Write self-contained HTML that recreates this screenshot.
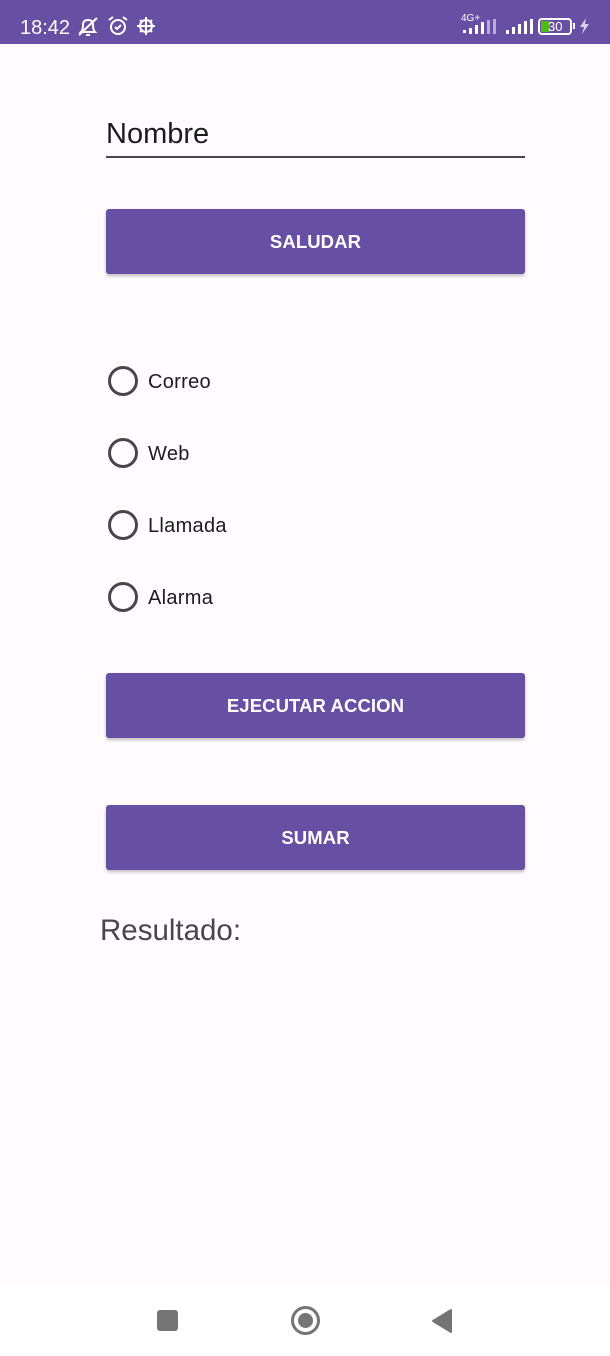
<!DOCTYPE html>
<html><head><meta charset="utf-8"><style>
*{margin:0;padding:0;box-sizing:border-box}
body{width:610px;height:1356px;background:#fffbfe;font-family:"Liberation Sans",Roboto,sans-serif;position:relative;overflow:hidden}
.sb{position:absolute;left:0;top:0;width:610px;height:44px;background:#674fa3;color:#fff}
.abs{position:absolute}
.btn{position:absolute;left:106px;width:419px;height:65px;background:#674fa3;border-radius:3px;box-shadow:0 2px 3px rgba(0,0,0,.25);color:#fff;font-size:18.5px;font-weight:bold;text-align:center;line-height:66px;letter-spacing:.1px}
.radio{position:absolute;left:108px;width:30px;height:30px;border:3px solid #49454f;border-radius:50%}
.rl{position:absolute;left:148px;font-size:20px;color:#1d1b20;letter-spacing:.3px}
.nav{position:absolute;left:0;top:1284px;width:610px;height:72px;background:#fff}
</style></head><body>
<div class="sb">
 <div class="abs" style="left:20px;top:16px;font-size:20px;line-height:24px">18:42</div>
 <svg class="abs" style="left:76px;top:16px" width="24" height="22" viewBox="0 0 24 22" fill="none" stroke="#fff" stroke-width="2"><path d="M5 16 Q7 14 7 9 Q7 4 12 4 Q17 4 17 9 Q17 14 19 16 Z"/><path d="M10 19h4"/><path d="M3 19L21 2"/></svg>
 <svg class="abs" style="left:107px;top:15px" width="22" height="22" viewBox="0 0 22 22" fill="none" stroke="#fff" stroke-width="2"><circle cx="11" cy="12" r="7"/><path d="M8 12l2 2 4-4"/><path d="M2 5l4-3M20 5l-4-3"/></svg>
 <svg class="abs" style="left:135px;top:15px" width="22" height="22" viewBox="0 0 22 22" fill="none" stroke="#fff" stroke-width="2"><circle cx="11" cy="11" r="6"/><path d="M11 2v3M11 17v3M2 11h3M17 11h3M5 5l2 2M15 15l2 2M5 17l2-2M15 7l2-2M6 11h10M11 6v10"/></svg>
 <div class="abs" style="left:461px;top:14px;font-size:10px;line-height:10px">4G+</div>
 <svg class="abs" style="left:461px;top:18px" width="40" height="18" viewBox="0 0 40 18"><rect x="2" y="12" width="3" height="3" fill="#fff"/><rect x="8" y="10" width="3" height="6" fill="#fff"/><rect x="14" y="7" width="3" height="9" fill="#fff"/><rect x="20" y="4" width="3" height="12" fill="#fff"/><rect x="26" y="2" width="3" height="14" fill="#b9acd8"/><rect x="32" y="1" width="3" height="15" fill="#b9acd8"/></svg>
 <svg class="abs" style="left:505px;top:18px" width="28" height="18" viewBox="0 0 28 18"><rect x="1" y="12" width="3" height="4" fill="#fff"/><rect x="7" y="9" width="3" height="7" fill="#fff"/><rect x="13" y="6" width="3" height="10" fill="#fff"/><rect x="19" y="3" width="3" height="13" fill="#fff"/><rect x="25" y="1" width="3" height="15" fill="#fff"/></svg>
 <div class="abs" style="left:538px;top:18px;width:34px;height:17px;border:2px solid #fff;border-radius:4px"><div style="position:absolute;left:1px;top:1px;width:9px;height:11px;background:#4cbb17"></div><div style="position:absolute;left:8px;top:-1px;font-size:13px;line-height:15px;color:#fff">30</div></div>
 <div class="abs" style="left:573px;top:23px;width:2px;height:6px;background:#fff"></div>
 <svg class="abs" style="left:578px;top:17px" width="12" height="18" viewBox="0 0 12 18"><path d="M8 1L2 10h4L4 17l7-10H7z" fill="#d9d0ee"/></svg>
</div>

<div class="abs" style="left:106px;top:118px;font-size:29px;color:#1d1b20">Nombre</div>
<div class="abs" style="left:106px;top:156px;width:419px;height:2px;background:#49454f"></div>

<div class="btn" style="top:209px">SALUDAR</div>

<div class="radio" style="top:366px"></div><div class="rl" style="top:371px">Correo</div>
<div class="radio" style="top:438px"></div><div class="rl" style="top:443px">Web</div>
<div class="radio" style="top:510px"></div><div class="rl" style="top:515px">Llamada</div>
<div class="radio" style="top:582px"></div><div class="rl" style="top:587px">Alarma</div>

<div class="btn" style="top:673px">EJECUTAR ACCION</div>
<div class="btn" style="top:805px">SUMAR</div>

<div class="abs" style="left:100px;top:914px;font-size:29.5px;color:#49454f">Resultado:</div>

<div class="nav">
 <div class="abs" style="left:157px;top:26px;width:21px;height:21px;background:#757575;border-radius:3px"></div>
 <div class="abs" style="left:291px;top:22px;width:29px;height:29px;border:3px solid #757575;border-radius:50%"><div style="position:absolute;left:4px;top:4px;width:15px;height:15px;background:#757575;border-radius:50%"></div></div>
 <svg class="abs" style="left:431px;top:24px" width="22" height="26" viewBox="0 0 22 26"><path d="M20 2L2 13l18 11z" fill="#757575" stroke="#757575" stroke-linejoin="round" stroke-width="2"/></svg>
</div>
</body></html>
